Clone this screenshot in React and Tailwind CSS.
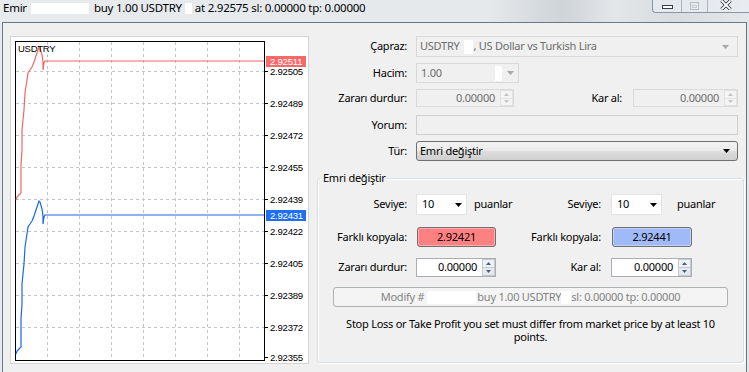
import React from 'react';

// price grid of the mini chart
const gridY = [71, 103, 135, 167, 199, 231, 263, 295, 327];
const gridX = [47.5, 79.5, 111.5, 143.5, 175.5, 207.5, 239.5];
const prices = [
  ['2.92505', 71], ['2.92489', 103], ['2.92472', 135], ['2.92455', 167], ['2.92439', 199],
  ['2.92422', 231], ['2.92405', 263], ['2.92389', 295], ['2.92372', 327], ['2.92355', 357],
];
const tick = '16,200 17,197 19,195 20,194 21,193 21,165 22,150 22,130 24,110 25,93 27,80 28,73 30,70 32,67 34,62 36,56 38,50 39,47 40,48 42,55 43,62 43,70 44,63 45,61 264,61';

function Chart() {
  return (
    <div className="w-[299px] h-[328px] border border-[#d4d4d4] bg-white">
      <svg width="297" height="326" viewBox="11 37 297 326" fontFamily="Liberation Sans, Arial, sans-serif">
        {gridY.map(y => (
          <line key={y} x1="16" x2="264" y1={y + 0.5} y2={y + 0.5} stroke="#c4c4c4" strokeDasharray="3 3" />
        ))}
        {gridX.map(x => (
          <line key={x} x1={x} x2={x} y1="42" y2="360" stroke="#c4c4c4" strokeDasharray="3 3" />
        ))}
        <rect x="15.5" y="41.5" width="249" height="319" fill="none" stroke="#000" />
        {prices.map(([p, y]) => (
          <g key={p}>
            <line x1="264" x2="268" y1={y + 0.5} y2={y + 0.5} stroke="#000" />
            <text x="270" y={y + 4} fontSize="9.6" fill="#000">{p}</text>
          </g>
        ))}
        <polyline points={tick} fill="none" stroke="#f86464" strokeWidth="1.2" />
        <g transform="translate(0 154)">
          <polyline points={tick} fill="none" stroke="#1a66f0" strokeWidth="1.2" />
        </g>
        <rect x="266" y="56" width="40" height="11" fill="#f86a6a" />
        <text x="270" y="65" fontSize="9.6" fill="#fff">2.92511</text>
        <rect x="266" y="210" width="40" height="11" fill="#1f6ff2" />
        <text x="270" y="219" fontSize="9.6" fill="#fff">2.92431</text>
        <text x="18" y="52" fontSize="9.5" fill="#000">USDTRY</text>
      </svg>
    </div>
  );
}

const Arrow = ({ color = '#000', w = 7 }) => (
  <svg width={w} height="4" viewBox="0 0 7 4"><path d="M0 0H7L3.5 4Z" fill={color} /></svg>
);

function Spin({ off }) {
  const c = off ? '#c4c4c4' : '#4a5f80';
  return (
    <div className="flex flex-col w-[13px] h-full">
      <div className={`flex-1 flex items-center justify-center border ${off ? 'border-[#e2e2e2] bg-[#f4f4f4]' : 'border-[#c2c8d0] bg-[#eef1f5]'}`}>
        <svg width="5" height="3"><path d="M0 3L2.5 0L5 3Z" fill={c} /></svg>
      </div>
      <div className={`flex-1 flex items-center justify-center border border-t-0 ${off ? 'border-[#e2e2e2] bg-[#f4f4f4]' : 'border-[#c2c8d0] bg-[#e6eaef]'}`}>
        <svg width="5" height="3"><path d="M0 0L2.5 3L5 0Z" fill={c} /></svg>
      </div>
    </div>
  );
}

function Num({ off, w }) {
  return (
    <div className={`${w} h-full flex items-stretch border ${off ? 'border-[#dadada] bg-[#f0f0f0] text-[#6d6d6d]' : 'border-[#abadb3] bg-white text-black'}`}>
      <div className="flex-1 flex items-center justify-end pr-[5px]">0.00000</div>
      <Spin off={off} />
    </div>
  );
}

function Level() {
  return (
    <div className="w-[51px] h-full bg-white border border-[#e4e4e4] flex items-center justify-between pl-[5px] pr-[4px]">
      <span>10</span>
      <Arrow />
    </div>
  );
}

const Blank = ({ w, h = 'h-[12px]' }) => <span className={`inline-block ${w} ${h} bg-white align-middle`} />;

export default function App() {
  return (
    <div className="w-[749px] h-[372px] overflow-hidden flex flex-col bg-[linear-gradient(90deg,#e8ebee_0%,#e6e9ec_65%,#cfd4d8_75%,#e3e6e9_82%,#d9dde0_90%,#e4e7ea_100%)] font-['Noto_Sans',sans-serif] text-[11px] tracking-[-0.25px] text-black">
      {/* title bar */}
      <div className="h-[22px] flex items-start justify-between">
        <div className="flex items-center h-[16px] pl-[3px] text-[11.5px] whitespace-nowrap">
          <span>Emir</span>
          <Blank w="w-[58px] ml-[4px] mr-[5px]" h="h-[11px]" />
          <span>buy 1.00 USDTRY</span>
          <Blank w="w-[7px] ml-[3px] mr-[3px]" h="h-[11px]" />
          <span>at 2.92575 sl: 0.00000 tp: 0.00000</span>
        </div>
        <div className="flex h-[13px] border-l border-b border-[#8a96a3] rounded-bl-[4px] bg-[#e9edf1]/70">
          <div className="w-[29px] flex items-center justify-center border-r border-[#a9b3bd]">
            <span className="w-[11px] h-[4px] bg-white border border-[#3a3f45] mt-[2px]" />
          </div>
          <div className="w-[26px] flex items-center justify-center border-r border-[#a9b3bd]">
            <span className="w-[9px] h-[8px] border border-[#b8bec4] flex items-center justify-center"><span className="w-[5px] h-[3px] border border-[#c8cdd2]" /></span>
          </div>
          <div className="w-[41px] flex items-start justify-center pr-[6px]">
            <svg width="12" height="10" viewBox="0 0 12 10">
              <path d="M1.5 0.5L10.5 9.5M10.5 0.5L1.5 9.5" stroke="#2e3338" strokeWidth="3.4" />
              <path d="M1.5 0.5L10.5 9.5M10.5 0.5L1.5 9.5" stroke="#fff" strokeWidth="1.8" />
            </svg>
          </div>
        </div>
      </div>

      {/* window body */}
      <div className="flex-1 flex mx-[2px] border-l border-t border-r border-[#6a7886] bg-[#f0f0f0] pt-[13px] pl-[7px]">
        <Chart />

        <div className="flex flex-col w-[436px]">
          <div className="flex items-center h-[21px]">
            <div className="w-[98px] text-right">Çapraz:</div>
            <div className="ml-[9px] w-[322px] h-full border border-[#d9d9d9] bg-[#f0f0f0] flex items-center justify-between pl-[3px] pr-[8px] text-[#6d6d6d]">
              <span className="flex items-center">USDTRY<Blank w="w-[9px] ml-[5px]" h="h-[14px]" />, US Dollar vs Turkish Lira</span>
              <Arrow color="#a8a8a8" />
            </div>
          </div>

          <div className="flex items-center h-[20px] mt-[6px]">
            <div className="w-[98px] text-right">Hacim:</div>
            <div className="ml-[9px] w-[103px] h-full border border-[#d9d9d9] bg-[#f0f0f0] flex items-center pl-[4px] text-[#6d6d6d]">
              <span className="flex-1">1.00</span>
              <span className="w-[7px] h-[15px] bg-white" />
              <span className="w-[16px] flex justify-center"><Arrow color="#a8a8a8" /></span>
            </div>
          </div>

          <div className="flex items-center h-[18px] mt-[6px]">
            <div className="w-[98px] text-right">Zararı durdur:</div>
            <div className="ml-[9px] h-full flex"><Num off w="w-[98px]" /></div>
            <div className="w-[108px] text-right">Kar al:</div>
            <div className="ml-[11px] h-full flex"><Num off w="w-[105px]" /></div>
          </div>

          <div className="flex items-center h-[20px] mt-[8px]">
            <div className="w-[98px] text-right">Yorum:</div>
            <div className="ml-[9px] w-[322px] h-full border border-[#cfcfcf] bg-[#f0f0f0]" />
          </div>

          <div className="flex items-center h-[20px] mt-[6px]">
            <div className="w-[98px] text-right">Tür:</div>
            <div className="ml-[9px] w-[322px] h-full border border-[#707070] rounded-[3px] bg-[linear-gradient(#f2f2f2,#ebebeb_50%,#dddddd_51%,#cfcfcf)] flex items-center justify-between pl-[3px] pr-[7px]">
              <span>Emri değiştir</span>
              <Arrow />
            </div>
          </div>

          {/* group box */}
          <div className="relative mt-[17px] ml-[8px] w-[427px] h-[185px] border border-[#d5dfe5] rounded-[3px] shadow-[inset_1px_1px_0_#fff,1px_1px_0_#fff] pt-[15px]">
            <span className="absolute left-[4px] top-[-9px] px-[1px] bg-[#f0f0f0]">Emri değiştir</span>

            <div className="flex items-center h-[21px]">
              <div className="w-[202px] h-full flex items-center">
                <div className="w-[89px] text-right">Seviye:</div>
                <div className="ml-[9px] h-full flex"><Level /></div>
                <span className="ml-[7px]">puanlar</span>
              </div>
              <div className="w-[81px] text-right">Seviye:</div>
              <div className="ml-[10px] h-full flex"><Level /></div>
              <span className="ml-[15px]">puanlar</span>
            </div>

            <div className="flex items-center h-[20px] mt-[12px]">
              <div className="w-[202px] h-full flex items-center">
                <div className="w-[89px] text-right">Farklı kopyala:</div>
                <div className="ml-[10px] w-[79px] h-full border border-[#707070] rounded-[3px] bg-[#ff8080] shadow-[inset_0_0_0_1px_rgba(255,255,255,0.35)] flex items-center justify-center">2.92421</div>
              </div>
              <div className="w-[81px] text-right">Farklı kopyala:</div>
              <div className="ml-[11px] w-[80px] h-full border border-[#707070] rounded-[3px] bg-[#a0baf8] shadow-[inset_0_0_0_1px_rgba(255,255,255,0.35)] flex items-center justify-center">2.92441</div>
            </div>

            <div className="flex items-center h-[19px] mt-[11px]">
              <div className="w-[202px] h-full flex items-center">
                <div className="w-[89px] text-right">Zararı durdur:</div>
                <div className="ml-[9px] h-full flex"><Num w="w-[80px]" /></div>
              </div>
              <div className="w-[81px] text-right">Kar al:</div>
              <div className="ml-[10px] h-full flex"><Num w="w-[81px]" /></div>
            </div>

            <div className="ml-[15px] mt-[10px] w-[395px] h-[20px] border border-[#adb2b5] rounded-[3px] bg-[#f4f4f4] flex items-center justify-center text-[#838383] whitespace-nowrap">
              <span>Modify #</span>
              <Blank w="w-[49px] ml-[3px] mr-[1px]" h="h-[13px]" />
              <span>buy 1.00 USDTRY</span>
              <Blank w="w-[10px]" h="h-[13px]" />
              <span>sl: 0.00000 tp: 0.00000</span>
            </div>

            <p className="mt-[10px] px-[12px] text-center leading-[13px]">
              Stop Loss or Take Profit you set must differ from market price by at least 10 points.
            </p>
          </div>
        </div>
      </div>
    </div>
  );
}
